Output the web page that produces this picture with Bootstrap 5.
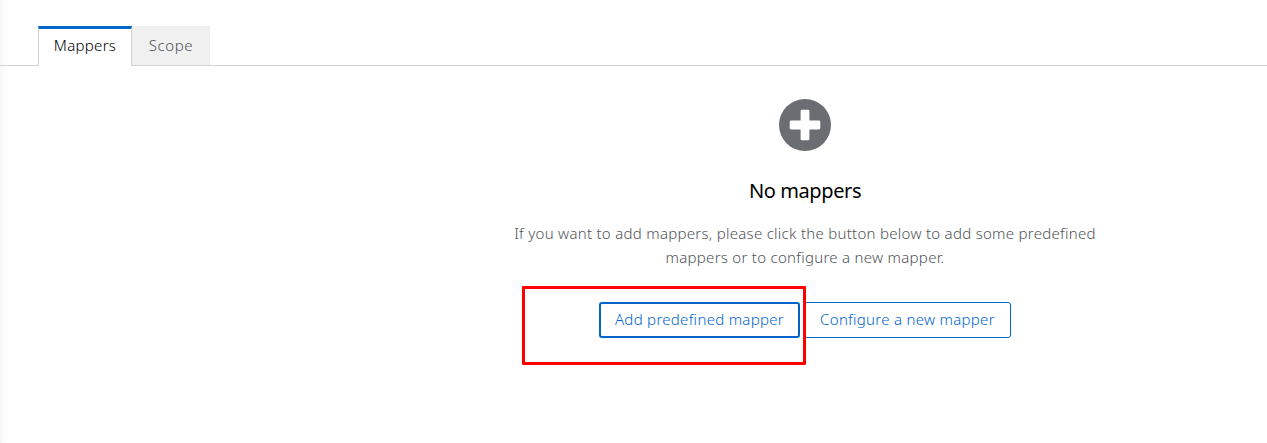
<!DOCTYPE html>
<html lang="en">
<head>
<meta charset="utf-8">
<meta name="viewport" content="width=device-width, initial-scale=1">
<title>Mappers</title>
<link rel="stylesheet" href="https://cdn.jsdelivr.net/npm/bootstrap@5.3.0/dist/css/bootstrap.min.css">
<style>
  body { font-family: "Noto Sans", sans-serif; font-size: 15px; font-weight: 300; line-height: 24px; color: #505459; height: 443px; overflow: hidden;
    background: linear-gradient(90deg, #f7f7f7, #fcfcfc 4px, #fff 9px); }
  .nav-tabs { --bs-nav-tabs-border-color: #d2d2d2; padding: 26px 0 0 38px; height: 66px; }
  .nav-tabs .nav-link { height: 39px; margin-bottom: 0; border-radius: 0; padding: 7px 0; text-align: center; color: #505459; background: #f0f0f0; border: 0; width: 78px; white-space: nowrap; letter-spacing: .6px; }
  .nav-tabs .nav-link.active { height: 40px; width: 94px; padding-top: 4px; color: #000; background: #fff; border: 1px solid #d2d2d2; border-top: 3px solid #06c; border-bottom: 0; letter-spacing: .3px; }
  .empty-state { width: 640px; margin-left: 485px; padding-top: 33px; }
  .empty-state h1 { font-size: 20px; line-height: 26px; margin: 27px 0 17px; font-weight: 400; color: #000; letter-spacing: -.4px; }
  .empty-state p { margin: 0 0 33px; white-space: nowrap; letter-spacing: .28px; }
  .btn-outline-primary { --bs-btn-color: #06c; --bs-btn-border-color: #06c; height: 36px; padding: 0 0 2px; border-radius: 3px; font-size: 15px; font-weight: 300; line-height: 24px; white-space: nowrap; letter-spacing: .29px; }
  .btn-add { width: 201px; border-width: 2px; }
  .btn-config { width: 207px; }
  .highlight { left: -77px; top: -16px; width: 284px; height: 79px; border: 3px solid #f00; border-radius: 1px; z-index: 2; pointer-events: none; }
</style>
</head>
<body>
<ul class="nav nav-tabs">
  <li class="nav-item"><a class="nav-link active" href="#">Mappers</a></li>
  <li class="nav-item"><a class="nav-link" href="#">Scope</a></li>
</ul>
<main class="empty-state text-center">
  <svg class="d-block mx-auto" width="52" height="52" viewBox="0 0 52 52" aria-hidden="true">
    <circle cx="26" cy="26" r="26" fill="#6a6e73"/>
    <path d="M23 10.7h6q1.4 0 1.4 1.4v9.5h9.5q1.4 0 1.4 1.4v6q0 1.4-1.4 1.4h-9.5v9.5q0 1.4-1.4 1.4h-6q-1.4 0-1.4-1.4v-9.5h-9.5q-1.4 0-1.4-1.4v-6q0-1.4 1.4-1.4h9.5v-9.5q0-1.4 1.4-1.4z" fill="#fff"/>
  </svg>
  <h1>No mappers</h1>
  <p>If you want to add mappers, please click the button below to add some predefined<br>mappers or to configure a new mapper.</p>
  <div class="d-flex justify-content-center gap-1">
    <div class="position-relative">
      <button class="btn btn-outline-primary btn-add" type="button">Add predefined mapper</button>
      <div class="highlight position-absolute"></div>
    </div>
    <button class="btn btn-outline-primary btn-config" type="button">Configure a new mapper</button>
  </div>
</main>
<script src="https://cdn.jsdelivr.net/npm/bootstrap@5.3.0/dist/js/bootstrap.bundle.min.js"></script>
</body>
</html>
